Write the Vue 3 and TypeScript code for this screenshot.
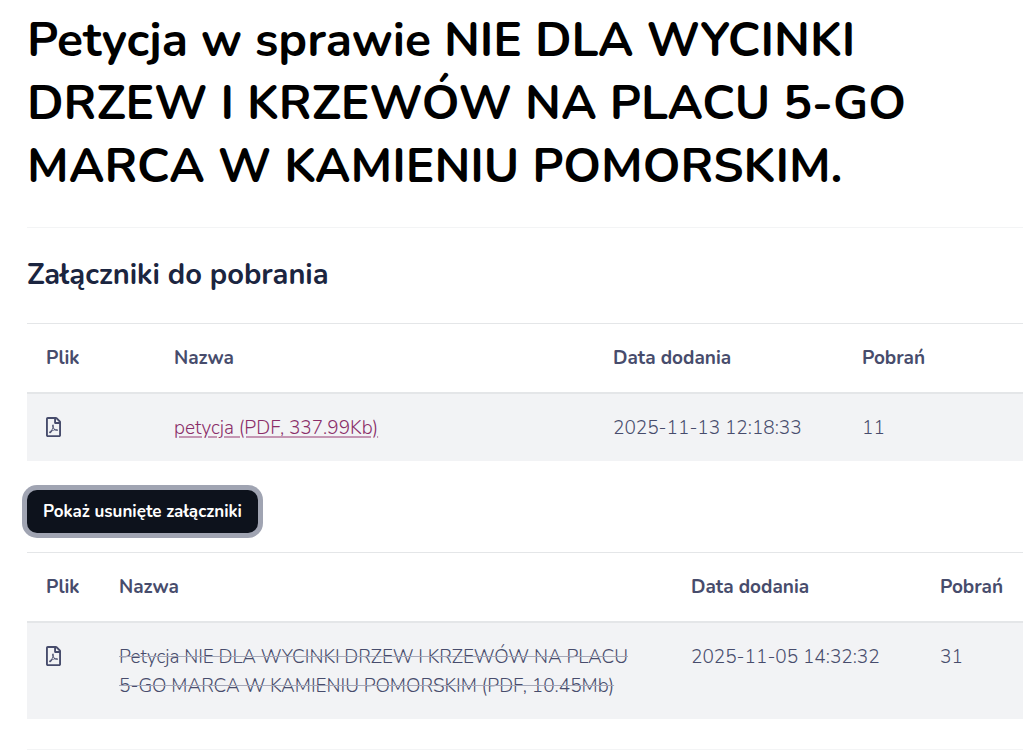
<script setup lang="ts">
import { ref } from 'vue'

interface Attachment {
  name: string
  added: string
  downloads: number
}

const files: Attachment[] = [
  { name: 'petycja (PDF, 337.99Kb)', added: '2025-11-13 12:18:33', downloads: 11 },
]
const removedFiles: Attachment[] = [
  {
    name: 'Petycja NIE DLA WYCINKI DRZEW I KRZEWÓW NA PLACU 5-GO MARCA W KAMIENIU POMORSKIM (PDF, 10.45Mb)',
    added: '2025-11-05 14:32:32',
    downloads: 31,
  },
]
const showRemoved = ref(true)
</script>

<template>
  <main class="page">
    <h1>Petycja w sprawie NIE DLA WYCINKI<br />DRZEW I KRZEWÓW NA PLACU 5-GO<br />MARCA W KAMIENIU POMORSKIM.</h1>
    <section class="attachments">
      <h2>Załączniki do pobrania</h2>
      <table class="current">
        <thead>
          <tr>
            <th class="file" scope="col">Plik</th>
            <th scope="col">Nazwa</th>
            <th class="date" scope="col">Data dodania</th>
            <th class="count" scope="col">Pobrań</th>
          </tr>
        </thead>
        <tbody>
          <tr v-for="file in files" :key="file.name">
            <td>
              <svg class="icon" viewBox="0 0 384 512" role="img" aria-label="PDF">
                <path d="M369.9 97.9L286 14C277 5 264.8-.1 252.1-.1H48C21.5 0 0 21.5 0 48v416c0 26.500 21.500 48 48 48h288c26.500 0 48-21.500 48-48V131.900c0-12.700-5.100-25-14.100-34zM332.100 128H256V51.900l76.100 76.100zM48 464V48h160v104c0 13.300 10.700 24 24 24h104v288H48zm250.200-143.700c-12.200-12-47-8.700-64.400-6.500-17.200-10.500-28.700-25-36.800-46.300 3.900-16.100 10.100-40.600 5.400-56-4.200-26.200-37.800-23.600-42.600-5.900-4.400 16.100-.4 38.500 7 67.100-10 23.900-24.900 56-35.400 74.400-20 10.300-47 26.200-51 46.200-3.300 15.800 26 55.200 76.100-31.200 22.400-7.400 46.800-16.500 68.400-20.100 18.900 10.200 41 17 55.800 17 25.500 0 28-28.200 17.500-38.700zm-198.100 77.800c5.100-13.700 24.500-29.500 30.400-35-19 30.300-30.400 35.700-30.400 35zm81.600-190.600c7.400 0 6.700 32.100 1.800 40.800-4.400-13.900-4.300-40.800-1.800-40.800zm-24.400 136.600c9.700-16.900 18-37 24.700-54.700 8.300 15.100 18.900 27.200 30.100 35.500-20.800 4.300-38.900 13.100-54.800 19.200zm131.600-5s-5 6-37.300-7.800c35.100-2.600 40.900 5.400 37.300 7.800z" />
              </svg>
            </td>
            <td class="name"><a href="#petycja">{{ file.name }}</a></td>
            <td>{{ file.added }}</td>
            <td>{{ file.downloads }}</td>
          </tr>
        </tbody>
      </table>

      <button type="button" @click="showRemoved = !showRemoved">Pokaż usunięte załączniki</button>

      <table v-if="showRemoved" class="removed">
        <thead>
          <tr>
            <th class="file" scope="col">Plik</th>
            <th scope="col">Nazwa</th>
            <th class="date" scope="col">Data dodania</th>
            <th class="count" scope="col">Pobrań</th>
          </tr>
        </thead>
        <tbody>
          <tr v-for="file in removedFiles" :key="file.name">
            <td>
              <svg class="icon" viewBox="0 0 384 512" role="img" aria-label="PDF">
                <path d="M369.9 97.9L286 14C277 5 264.8-.1 252.1-.1H48C21.5 0 0 21.5 0 48v416c0 26.500 21.500 48 48 48h288c26.500 0 48-21.500 48-48V131.900c0-12.700-5.100-25-14.100-34zM332.100 128H256V51.900l76.100 76.100zM48 464V48h160v104c0 13.300 10.700 24 24 24h104v288H48zm250.200-143.700c-12.200-12-47-8.700-64.400-6.500-17.200-10.500-28.700-25-36.800-46.300 3.900-16.100 10.100-40.600 5.400-56-4.200-26.200-37.800-23.600-42.600-5.900-4.400 16.100-.4 38.500 7 67.100-10 23.900-24.900 56-35.400 74.400-20 10.300-47 26.200-51 46.200-3.300 15.800 26 55.200 76.100-31.200 22.400-7.400 46.800-16.500 68.400-20.100 18.900 10.200 41 17 55.800 17 25.500 0 28-28.200 17.500-38.700zm-198.100 77.800c5.100-13.700 24.500-29.500 30.400-35-19 30.300-30.400 35.700-30.400 35zm81.600-190.600c7.400 0 6.700 32.100 1.800 40.800-4.400-13.900-4.300-40.800-1.800-40.800zm-24.400 136.600c9.700-16.900 18-37 24.700-54.700 8.300 15.100 18.900 27.200 30.100 35.500-20.800 4.300-38.900 13.100-54.800 19.200zm131.600-5s-5 6-37.300-7.800c35.100-2.600 40.900 5.400 37.300 7.800z" />
              </svg>
            </td>
            <td class="name"><del>{{ file.name }}</del></td>
            <td>{{ file.added }}</td>
            <td>{{ file.downloads }}</td>
          </tr>
        </tbody>
      </table>
    </section>
  </main>
</template>

<style>
body {
  margin: 0;
  background: #fff;
}
</style>

<style scoped>
.page {
  padding: 9px 1px 0 27px;
  font-family: Nunito, Lato, "Open Sans", sans-serif;
  font-size: 19px;
  font-weight: 300;
  line-height: 29px;
  color: #474c6c;
}
h1 {
  margin: 0 0 29px;
  color: #000;
  font-size: 48px;
  font-weight: 700;
  line-height: 63px;
}
.attachments {
  border-top: 1px solid #f3f4f5;
  border-bottom: 1px solid #f3f4f5;
  padding: 28px 0 30px;
}
h2 {
  margin: 0 0 30px;
  color: #1b2540;
  font-size: 29px;
  font-weight: 700;
  line-height: 37px;
}
table {
  width: 100%;
  table-layout: fixed;
  border-spacing: 0;
  border-top: 1px solid #e4e6e8;
}
th,
td {
  padding: 20px 19px 18px;
  text-align: left;
  vertical-align: top;
}
th {
  padding-bottom: 19px;
  border-bottom: 2px solid #e4e6e8;
  font-weight: 700;
}
td {
  background: #f2f3f5;
}
.name {
  padding-right: 32px;
}
.file {
  width: 90px;
}
.removed .file {
  width: 35px;
}
.date {
  width: 211px;
}
.count {
  width: 142px;
}
.removed .count {
  width: 64px;
}
.icon {
  display: block;
  width: 15px;
  height: 20px;
  margin-top: 3px;
  fill: currentColor;
}
a {
  color: #8a2d68;
  text-decoration-color: #c496b3;
  text-decoration-thickness: 2px;
  text-underline-offset: 2px;
}
del {
  text-decoration-color: #a6a9b9;
}
button {
  display: block;
  margin: 29px 0 19px;
  padding: 10px 16px;
  border: 0;
  border-radius: 10px;
  background: #0d121c;
  box-shadow: 0 0 0 5px #a0a4b2;
  color: #fff;
  font-family: inherit;
  font-size: 17px;
  font-weight: 700;
  line-height: 23px;
}
</style>
